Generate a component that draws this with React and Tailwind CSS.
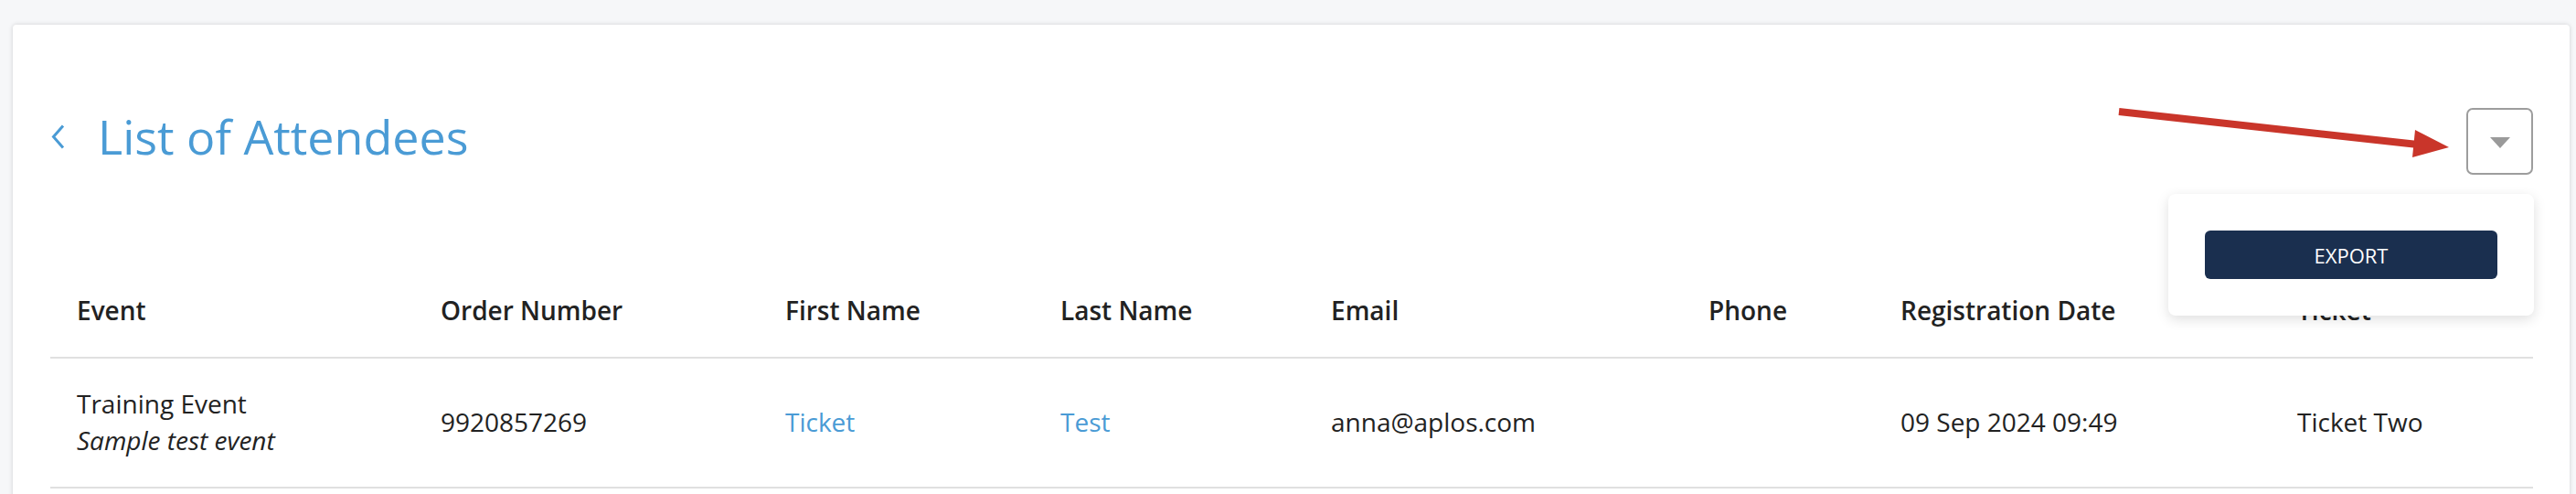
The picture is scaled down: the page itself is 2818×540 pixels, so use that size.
import React from "react";

const cols = "grid grid-cols-[398px_377px_301px_296px_413px_210px_434px_287px]";

export default function App() {
  const headers = [
    "Event",
    "Order Number",
    "First Name",
    "Last Name",
    "Email",
    "Phone",
    "Registration Date",
    "Ticket",
  ];
  return (
    <div className="relative h-[540px] w-[2818px] overflow-hidden bg-[#f6f7f9] font-['Open_Sans',sans-serif] text-[#222]">
      <div className="ml-[14px] mr-[7px] mt-[27px] min-h-[620px] rounded-[4px] bg-white pl-[41px] pr-[40px] pt-[91px] shadow-[0_0_5px_rgba(0,0,0,0.16)]">
        <div className="flex items-start justify-between">
          <div className="-mt-[5px] flex items-center">
            <svg width="16" height="27" viewBox="0 0 16 27" className="ml-[1px]">
              <polyline
                points="13,1.5 2.5,13.5 13,25.5"
                fill="none"
                stroke="#4a9bd5"
                strokeWidth="3"
                strokeLinejoin="miter"
              />
            </svg>
            <h1 className="ml-[35px] text-[52px] font-normal leading-[72px] text-[#4a9bd5]">
              List of Attendees
            </h1>
          </div>
          <div className="relative">
            <button className="flex h-[73px] w-[73px] items-center justify-center rounded-[7px] border-2 border-[#9d9d9d] bg-white">
              <svg width="22" height="12" viewBox="0 0 22 12" className="mt-[3px]">
                <polygon points="0,0 22,0 11,12" fill="#9a9a9a" />
              </svg>
            </button>
            <div className="absolute right-[-1px] top-[94px] z-10 w-[400px] rounded-[8px] bg-white p-[40px] shadow-[0_4px_14px_rgba(0,0,0,0.13)]">
              <button className="flex h-[53px] w-full items-center justify-center rounded-[6px] bg-[#1a2f4f] text-[22px] leading-none text-white">
                EXPORT
              </button>
            </div>
          </div>
        </div>

        <div className="mt-[96px]">
          <div className={`${cols} border-b-2 border-[#e0e0e0]`}>
            {headers.map((h) => (
              <div
                key={h}
                className="px-[29px] pb-[31px] pt-[32px] text-[28px] font-semibold leading-[40px] text-[#222]"
              >
                {h}
              </div>
            ))}
          </div>
          <div className={`${cols} h-[142px] items-center border-b-2 border-[#e0e0e0] pb-[2px] text-[28px] leading-[40px]`}>
            <div className="px-[29px]">
              <div>Training Event</div>
              <div className="italic">Sample test event</div>
            </div>
            <div className="px-[29px]">9920857269</div>
            <div className="px-[29px] text-[#4a9bd5]">Ticket</div>
            <div className="px-[29px] text-[#4a9bd5]">Test</div>
            <div className="px-[29px]">anna@aplos.com</div>
            <div className="px-[29px]"></div>
            <div className="px-[29px]">09 Sep 2024 09:49</div>
            <div className="px-[29px]">Ticket Two</div>
          </div>
        </div>
      </div>

      <svg
        className="pointer-events-none absolute left-[2300px] top-[100px]"
        width="400"
        height="90"
        viewBox="0 0 400 90"
      >
        <line x1="18" y1="22" x2="345" y2="58" stroke="#c9352a" strokeWidth="8" />
        <polygon points="342,42 379,61 339,72" fill="#c9352a" />
      </svg>
    </div>
  );
}
